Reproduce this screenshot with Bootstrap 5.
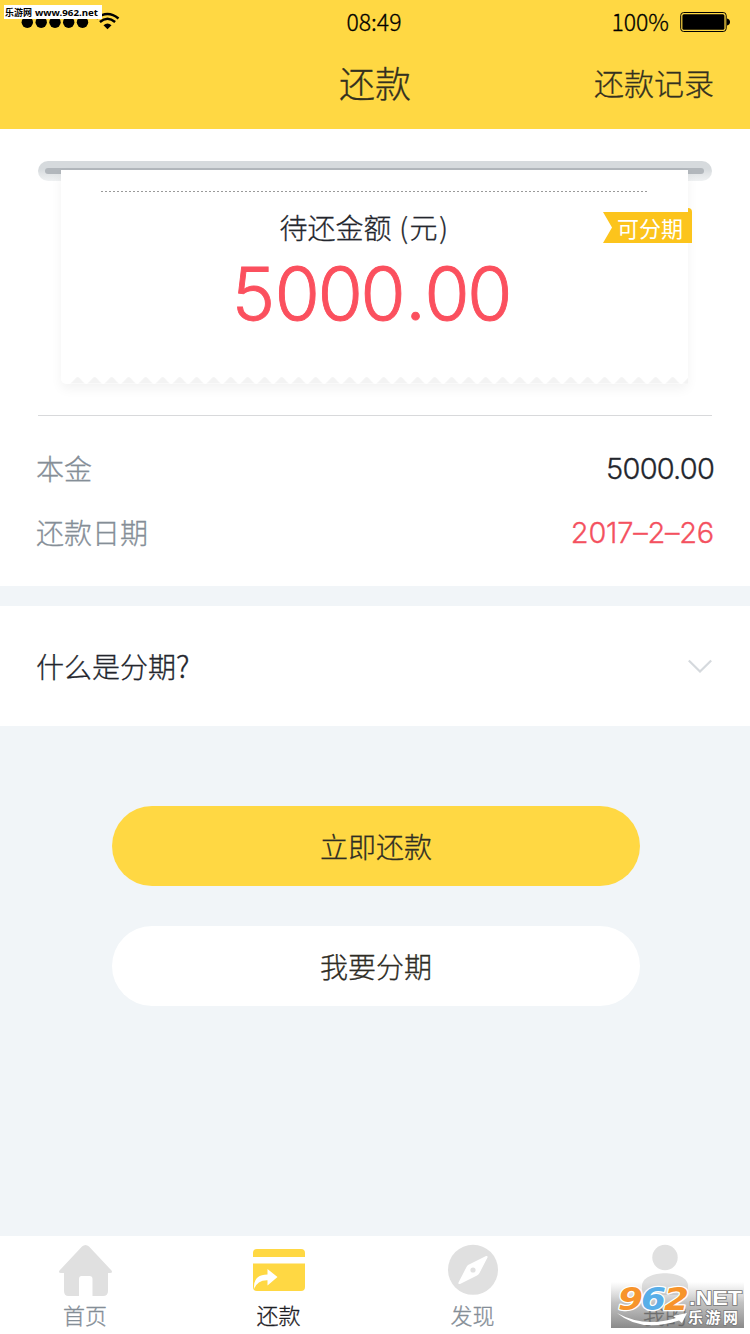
<!DOCTYPE html>
<html lang="zh-CN">
<head>
<meta charset="utf-8">
<meta name="viewport" content="width=device-width, initial-scale=1">
<title>还款</title>
<link href="https://cdn.jsdelivr.net/npm/bootstrap@5.3.0/dist/css/bootstrap.min.css" rel="stylesheet">
<style>
body{width:750px;height:1334px;background:#f1f5f8;color:#23262d;font-family:"Noto Sans CJK SC",sans-serif;font-weight:300;font-size:28px;line-height:40px;overflow:hidden;-webkit-text-stroke:.3px currentColor}
.app-head{height:129px;background:#ffd843;color:#33301f}
.status{height:44px;color:#000;font-size:23px;line-height:42px}
.status span span,.status .clock{position:relative;top:-1px}
.grid3{display:grid;grid-template-columns:1fr auto 1fr;align-items:center}
.title-row{height:80px;padding:0 36px 3px}
.title-row h1{font-size:36px;font-weight:300;line-height:77px}
.title-row a{font-size:30px;line-height:77px;color:inherit}
.site-tag{left:4px;top:5px;width:98px;height:14px;background:#fff;z-index:2;-webkit-text-stroke:0}
.bill{height:457px;padding:32px 38px 0}
.rail{height:20px;border-radius:10px;background:linear-gradient(#d6dadd 0 8px,#e2e5e7 13px,#eff1f2);padding:7px 8px 0 7px}
.rail i{display:block;height:6px;border-radius:3px;background:#b2b7bc}
.paper{height:214px;margin:-11px 24px 0 23px;padding-top:21px;background:#fff;box-shadow:0 5px 12px rgba(0,0,0,.05);border-radius:0 0 5px 5px}
.perf{height:1px;margin:0 39px 0 40px;background:repeating-linear-gradient(90deg,#9a9a9a 0 2px,#fff 2px 4px)}
.heading{padding:15px 20px 0 0}
.heading span{letter-spacing:1.6px}
.latin{font-family:Inter,"Noto Sans CJK SC",sans-serif;font-weight:300}
.amount{font-size:73px;line-height:80px;color:#fb505e;letter-spacing:-2.3px;padding-right:7px;margin-top:7px;-webkit-text-stroke:.9px currentColor}
.amount .lead-digit{margin-right:2px}
.amount .point{margin:0 1px 0 2px}
.teeth{left:0;bottom:0}
.ribbon{right:-4px;top:38px;-webkit-text-stroke:0}
.rule{height:1px;background:#d8d9db;margin-top:31px}
.label-muted{color:#858e97}
.figure-text{font-size:29px;letter-spacing:-.8px}
.red{color:#f4515f;letter-spacing:-.25px}
.rows{padding-top:33px;margin:0 -2px}
.rows>div+div{margin-top:24px}
.rows dt{position:relative;top:-1px}
.faq{height:120px;margin-top:20px;padding:0 38px 0 36px}
.actions{gap:40px;padding:80px 0 0 2px}
.cta{width:528px;height:80px;font-size:28px;font-weight:300;color:#2e2c24;padding:0}
.cta.pay{background:#ffd843}
.cta.split{background:#fff}
.tabs{height:98px;font-size:22px;line-height:28px;color:#858e97}
.tabs a{color:inherit;flex:0 0 auto}
.tabs svg{display:block}
.stamp{right:6px;bottom:6px;-webkit-text-stroke:0}
</style>
</head>
<body class="d-flex flex-column position-relative">
<header class="app-head">
  <div class="status grid3 position-relative">
    <svg width="130" height="44">
      <g fill="#000"><circle cx="27.3" cy="22.3" r="5.7"/><circle cx="41.2" cy="22.3" r="5.7"/><circle cx="55" cy="22.3" r="5.7"/><circle cx="68.700" cy="22.3" r="5.7"/><circle cx="82.500" cy="22.3" r="5.7"/><path d="M103.500 25.300Q107.500 21.800 111.500 25.300L107.500 29.300Z"/></g>
      <g fill="none" stroke="#000" stroke-width="2.500"><path d="M96.300 18.500Q107.500 9.500 118.500 18.500"/><path d="M99.900 22Q107.500 15.600 115.100 22"/></g>
    </svg>
    <span class="clock" style="padding-right:2px">08:49</span>
    <span class="d-flex justify-content-end align-items-center"><span>100%</span>
      <svg width="50" height="24" style="margin:0 20px 0 11px"><rect x=".7" y="2.500" width="45.500" height="19" rx="3" fill="none" stroke="#000" stroke-width="1"/><rect x="2.400" y="4.200" width="42" height="15.600" rx="1.500"/><path d="M47 8.500q3 .8 3 3.500t-3 3.500z"/></svg>
    </span>
    <svg class="site-tag position-absolute" viewBox="0 0 98 14"><text x="1" y="11" font-size="9" font-weight="700" font-family="Noto Sans CJK SC,sans-serif" textLength="27">乐游网</text><text x="31" y="11" font-size="9.500" font-weight="700" font-family="Noto Sans,sans-serif" textLength="63" lengthAdjust="spacingAndGlyphs">www.962.net</text></svg>
  </div>
  <div class="title-row grid3">
    <span></span><h1 class="m-0">还款</h1><a class="text-decoration-none text-end">还款记录</a>
  </div>
</header>

<main class="flex-grow-1">
  <section class="bill bg-white">
    <div class="rail"><i></i></div>
    <div class="paper position-relative">
      <div class="perf"></div>
      <div class="heading text-center">待还金额<span> (元)</span></div>
      <div class="amount latin text-center"><span class="lead-digit">5</span>000<span class="point">.</span>00</div>
      <svg class="teeth position-absolute" width="627" height="8">
        <defs><pattern id="tooth" x="8.200" width="17" height="8" patternUnits="userSpaceOnUse"><path d="M1 7.500Q3.500 6 6 2.800Q8.500-.8 11 2.800Q13.500 6 16 7.500Z" fill="#f3f3f3"/></pattern></defs>
        <rect x="8" width="619" height="8" fill="url(#tooth)"/>
      </svg>
      <svg class="ribbon position-absolute" width="89" height="36"><path d="M85 0Q89 0 89 4V35H0L9 19.500L0 4H85Z" fill="#fcc41c"/><text x="14" y="28.500" font-size="22" font-weight="400" fill="#fff">可分期</text></svg>
    </div>
    <div class="rule"></div>
    <dl class="mb-0 rows">
      <div class="d-flex justify-content-between"><dt class="fw-light label-muted">本金</dt><dd class="m-0 latin figure-text">5000.00</dd></div>
      <div class="d-flex justify-content-between"><dt class="fw-light label-muted">还款日期</dt><dd class="m-0 latin figure-text red">2017–2–26</dd></div>
    </dl>
  </section>
  <section class="faq bg-white d-flex align-items-center justify-content-between">
    <span style="padding-bottom:2px">什么是分期<span style="font-size:30px">?</span></span>
    <svg width="24" height="14"><path d="M.8 1.500L12 12.500L23.200 1.500" fill="none" stroke="#d5d9dd" stroke-width="2.200"/></svg>
  </section>
  <div class="actions d-flex flex-column align-items-center">
    <button class="btn cta pay rounded-pill border-0">立即还款</button>
    <button class="btn cta split rounded-pill border-0">我要分期</button>
  </div>
</main>

<nav class="tabs bg-white d-flex overflow-hidden">
  <a class="text-decoration-none d-flex flex-column align-items-center" style="width:170px"><svg width="54" height="64" viewBox="58 1236 54 64"><path d="M82 1246.500Q85.500 1243.500 89 1246.500L111.500 1270.500Q113 1273 110 1273H108V1291Q108 1296 103 1296H92.500V1279Q92.500 1276 89.500 1276H81.500Q79 1276 79 1279V1296H68.500Q64 1296 64 1291V1273H61Q58 1273 59.500 1270.500Z" fill="#e0e0e0"/></svg><span>首页</span></a>
  <a class="text-decoration-none d-flex flex-column align-items-center" style="width:217px;color:#1e2025"><svg width="54" height="64" viewBox="252 1236 54 64"><path d="M253 1257V1253Q253 1249 257 1249H301Q305 1249 305 1253V1257ZM253 1263.500H305V1287Q305 1291 301 1291H257Q253 1291 253 1287Z" fill="#ffd843"/><path d="M254 1289Q253 1274.500 267.500 1274.500V1269L277.500 1277L267.500 1285.500V1280.300Q257.500 1280 254 1289Z" fill="#fff"/></svg><span>还款</span></a>
  <a class="text-decoration-none d-flex flex-column align-items-center" style="width:171px"><svg width="54" height="64" viewBox="446 1236 54 64"><circle cx="473" cy="1269.800" r="25" fill="#e0e0e0"/><path d="M486 1256Q488 1255.500 487.500 1257.500L479.500 1273Q478.500 1274.500 477 1275.500L460 1284Q458 1284.500 458.500 1282.500L466.500 1267Q467 1265.700 468.500 1264.700Z" fill="#fff"/><circle cx="473" cy="1270" r="2.600" fill="#e0e0e0"/></svg><span>发现</span></a>
  <a class="text-decoration-none d-flex flex-column align-items-center" style="width:214px"><svg width="54" height="64" viewBox="638 1236 54 64"><circle cx="665" cy="1257.500" r="12.700" fill="#e0e0e0"/><path d="M642 1292V1286C642 1269 688 1269 688 1286V1292Q688 1295 685 1295H645Q642 1295 642 1292Z" fill="#e0e0e0"/></svg><span style="color:#333">我的</span></a>
</nav>

<svg class="stamp position-absolute overflow-visible" width="133" height="46" viewBox="0 0 133 46">
  <defs><linearGradient id="shade" x2="0" y2="1"><stop stop-color="#aaa" stop-opacity="0"/><stop offset=".45" stop-color="#999" stop-opacity=".6"/><stop offset="1" stop-color="#707070" stop-opacity=".82"/></linearGradient></defs>
  <rect width="133" height="46" fill="url(#shade)"/>
  <path d="M6 31Q33 46 65 36L62 34L76 31L71 41L68 38.500Q30 51 6 31Z" fill="#fff"/>
  <g font-family="DejaVu Sans,sans-serif" font-weight="700" font-style="italic" font-size="32" stroke="#fff" stroke-width="2.500" stroke-linejoin="round" style="paint-order:stroke"><text x="7" y="28" fill="#f7942b" textLength="25" lengthAdjust="spacingAndGlyphs">9</text><text x="30" y="28" fill="#58aee8" textLength="25" lengthAdjust="spacingAndGlyphs">6</text><text x="53" y="28" fill="#f7942b" textLength="25" lengthAdjust="spacingAndGlyphs">2</text></g>
  <g fill="#fff" stroke="#777" stroke-width="1.500" style="paint-order:stroke" font-weight="700"><text x="78" y="23" font-family="Liberation Sans,sans-serif" font-size="20" textLength="53" lengthAdjust="spacingAndGlyphs">.NET</text><text x="77" y="41" font-size="15" textLength="50">乐游网</text></g>
</svg>
<script src="https://cdn.jsdelivr.net/npm/bootstrap@5.3.0/dist/js/bootstrap.bundle.min.js"></script>
</body>
</html>
